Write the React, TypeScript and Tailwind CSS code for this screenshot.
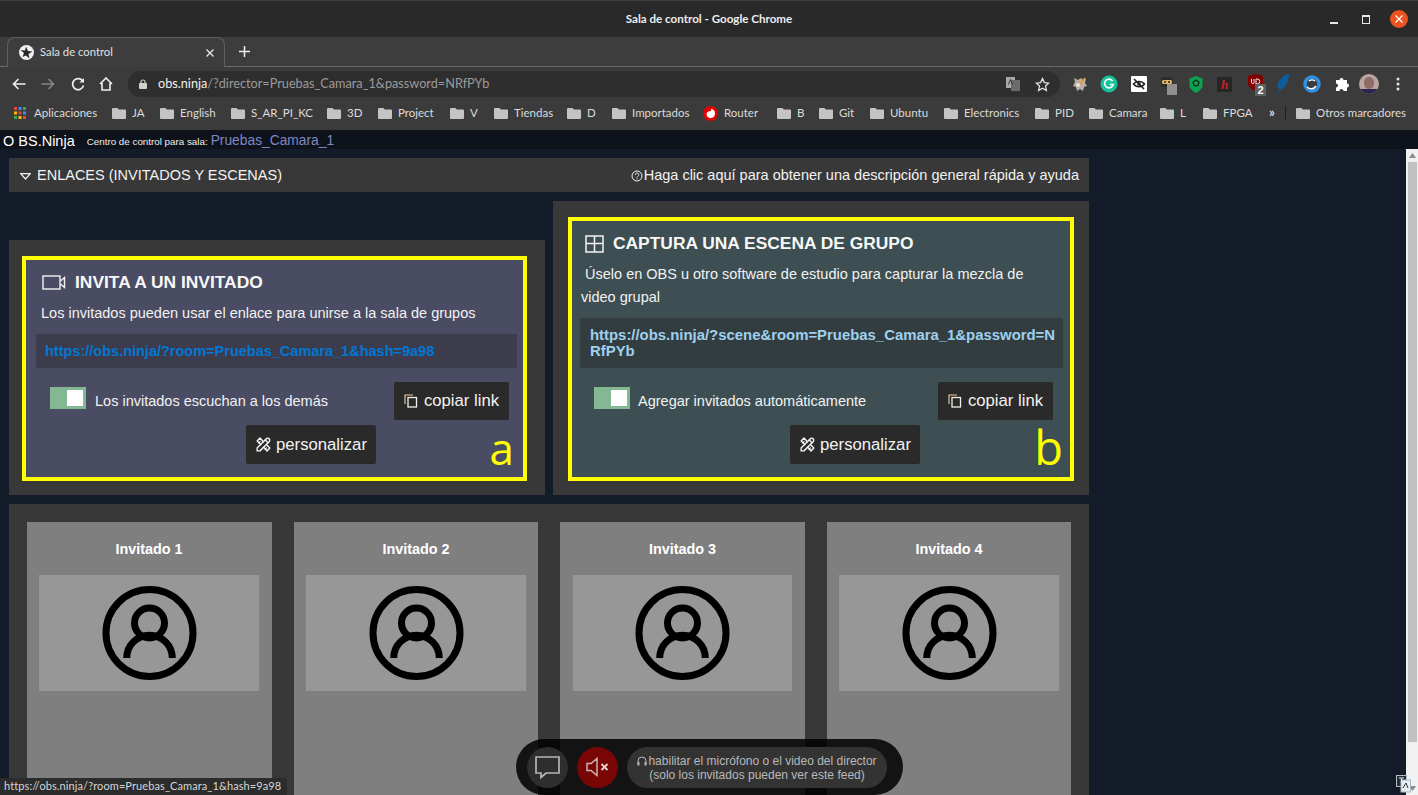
import React from "react";
import { TbTools } from "react-icons/tb";

const bookmarks: [string, string][] = [
  ["JA", "w-[48px]"],
  ["English", "w-[71px]"],
  ["S_AR_PI_KC", "w-[96px]"],
  ["3D", "w-[51px]"],
  ["Project", "w-[72px]"],
  ["V", "w-[44px]"],
  ["Tiendas", "w-[73px]"],
  ["D", "w-[45px]"],
  ["Importados", "w-[91px]"],
];
const bookmarks2: [string, string][] = [
  ["B", "w-[42px]"],
  ["Git", "w-[51px]"],
  ["Ubuntu", "w-[74px]"],
  ["Electronics", "w-[91px]"],
  ["PID", "w-[54px]"],
  ["Camara", "w-[71px]"],
  ["L", "w-[43px]"],
  ["FPGA", "w-[66px]"],
];

function Folder() {
  return (
    <svg width="14" height="12" viewBox="0 0 14 12" className="shrink-0">
      <path d="M1 1h4.500l1.300 1.500H13a1 1 0 0 1 1 1V11a1 1 0 0 1-1 1H1a1 1 0 0 1-1-1V2a1 1 0 0 1 1-1z" fill="#c4c4c4" />
    </svg>
  );
}

function Bookmark({ label, w }: { label: string; w: string }) {
  return (
    <div className={`flex items-center gap-[6px] shrink-0 ${w}`}>
      <Folder />
      <span className="whitespace-nowrap">{label}</span>
    </div>
  );
}

function Extensions() {
  return (
    <div className="flex items-center shrink-0">
      <svg width="18" height="18" viewBox="0 0 18 18" className="ml-[11px]">
        <path d="M3 3l4 2 3-2 2 2 3-2-1 5 2 3-3 1-1 4-3-2-3 2-1-4-3-1 2-4z" fill="#b9ada4" />
        <path d="M9 9l5-6" stroke="#e09a2b" strokeWidth="1.600" />
        <circle cx="7" cy="10" r="2" fill="#e8e4df" />
      </svg>
      <svg width="20" height="20" viewBox="0 0 20 20" className="ml-[10px]">
        <circle cx="10" cy="10" r="8.500" fill="#15c39a" />
        <path d="M13.600 7a4.400 4.400 0 1 0 .6 3.500h-3.500" fill="none" stroke="#fff" strokeWidth="1.700" />
      </svg>
      <svg width="16" height="16" viewBox="0 0 16 16" className="ml-[12px]">
        <rect width="16" height="16" rx="1" fill="#fff" />
        <path d="M2.500 8C5 4.500 11 4.500 13.500 8 11 11.500 5 11.500 2.500 8z" fill="none" stroke="#222" strokeWidth="1.500" />
        <circle cx="8" cy="8" r="1.800" fill="#222" />
        <path d="M3 3l10 10" stroke="#222" strokeWidth="1.600" />
      </svg>
      <div className="relative w-[20px] h-[20px] ml-[13px]">
        <svg width="14" height="12" viewBox="0 0 14 12" className="absolute left-0 top-[2px]">
          <rect x="1" y="1" width="12" height="10" rx="3" fill="#2c2c2c" />
          <rect x="2" y="4" width="10" height="4" rx="1.500" fill="#e3b766" />
          <circle cx="5" cy="6" r="1" fill="#222" />
          <circle cx="9" cy="6" r="1" fill="#222" />
        </svg>
        <div className="absolute left-[7px] top-[10px] w-[10px] h-[11px] bg-[#8f8f8f]" />
      </div>
      <svg width="14" height="17" viewBox="0 0 14 17" className="ml-[9px]">
        <path d="M7 0l6.500 2.500V9c0 3.500-3 6-6.500 8C3.500 15 .5 12.500 .5 9V2.500z" fill="#0aa14f" />
        <path d="M7 4l3 2.200-1.100 3.500H5.100L4 6.200z" fill="none" stroke="#0c2d1b" strokeWidth="1.300" />
      </svg>
      <div className="w-[15px] h-[15px] ml-[14px] bg-[#262626] flex items-center justify-center text-[13px] italic font-bold text-[#d02020] [font-family:'Liberation_Serif',serif] leading-none">
        h
      </div>
      <div className="relative w-[20px] h-[20px] ml-[16px]">
        <svg width="15" height="17" viewBox="0 0 15 17" className="absolute left-0 top-0">
          <path d="M7.500 0L15 2v7c0 4-3.500 6.500-7.500 8C3.500 15.500 0 13 0 9V2z" fill="#800000" />
          <path d="M3.500 5v3.500c0 1.500 2.500 1.500 2.500 0V5M8 5v5h1.300a2.500 2.500 0 0 0 0-5z" fill="none" stroke="#eee" strokeWidth="1" />
        </svg>
        <div className="absolute left-[7px] top-[10px] w-[11px] h-[12px] bg-[#5e5e5e] text-white text-[11px] font-bold leading-[12px] text-center [font-family:'Liberation_Sans',sans-serif]">
          2
        </div>
      </div>
      <svg width="14" height="20" viewBox="0 0 14 20" className="ml-[8px]">
        <path d="M13 0C7 2 2 7 2 12c0 2 1 3 3 3C9 14 12 7 13 0zM4 15l-3 5" fill="#0d5d9c" stroke="#0d5d9c" strokeWidth="1" />
      </svg>
      <svg width="18" height="18" viewBox="0 0 18 18" className="ml-[13px]">
        <circle cx="9" cy="9" r="7" fill="none" stroke="#2f8fe0" strokeWidth="3.500" />
        <path d="M4 12c3 3 7 2 9-1M6 6c2-1.500 4-1.500 6 0" fill="none" stroke="#fff" strokeWidth="1.400" />
      </svg>
      <svg width="16" height="16" viewBox="0 0 16 16" className="ml-[14px]">
        <path d="M1 4h3.500a2 2 0 1 1 4 0H12v3.500a2 2 0 1 1 0 4V15H8.500a2 2 0 1 0-4 0H1v-3.500a2 2 0 1 0 0-4z" fill="#fff" />
      </svg>
      <div className="relative w-[20px] h-[20px] ml-[8px] rounded-full overflow-hidden bg-[#b9a6a3]">
        <div className="absolute left-[5px] top-[3px] w-[10px] h-[12px] rounded-full bg-[#8e6d65]" />
        <div className="absolute left-0 top-[15px] w-[20px] h-[5px] bg-[#2a2550]" />
      </div>
      <svg width="4" height="14" viewBox="0 0 4 14" className="ml-[17px] mr-[18px]">
        <circle cx="2" cy="2" r="1.500" fill="#e6e6e6" />
        <circle cx="2" cy="7" r="1.500" fill="#e6e6e6" />
        <circle cx="2" cy="12" r="1.500" fill="#e6e6e6" />
      </svg>
    </div>
  );
}

function Chrome() {
  return (
    <div className="shrink-0 text-[#e6e6e6] [font-family:Lato,'Noto_Sans',sans-serif]">
      <div className="relative h-[37px] bg-[#292929] flex items-center justify-center border-t border-[#3d3d3d]">
        <span className="text-[11.600px] font-bold text-[#ededed]">Sala de control - Google Chrome</span>
        <div className="absolute right-[10px] top-[9px] flex items-center">
          <div className="w-[8px] h-[1.500px] bg-[#e6e6e6] mt-[8px] mr-[24px]" />
          <div className="w-[8px] h-[9px] border border-[#e6e6e6] border-t-2 mr-[20px]" />
          <div className="w-[18px] h-[18px] rounded-full bg-[#e95420] flex items-center justify-center">
            <svg width="8" height="8" viewBox="0 0 8 8"><path d="M.5.5l7 7M7.500.5l-7 7" stroke="#fff" strokeWidth="1.200" /></svg>
          </div>
        </div>
      </div>
      <div className="h-[30px] bg-[#3d3d3d] border-b border-[#6a6a6a] flex items-end pl-[7px]">
        <div className="w-[218px] h-[30px] -mb-px bg-[#3d3d3d] border border-b-0 border-[#5f5f5f] rounded-t-[8px] flex items-center pl-[11px] pr-[10px]">
          <svg width="15" height="15" viewBox="0 0 15 15" className="shrink-0">
            <circle cx="7.500" cy="7.500" r="7.500" fill="#f1f1f1" />
            <path d="M7 1.500l2 4.500 4.500.5L9.500 9l1 4.500L7 10.500 3.500 12 5 8 1.500 5 6 5.500z" fill="#2a2a2a" />
          </svg>
          <span className="ml-[6px] text-[11.300px] text-[#e0e0e0] flex-1">Sala de control</span>
          <svg width="8" height="8" viewBox="0 0 8 8"><path d="M.5.5l7 7M7.500.5l-7 7" stroke="#e8e8e8" strokeWidth="1.300" /></svg>
        </div>
        <svg width="11" height="11" viewBox="0 0 11 11" className="ml-[14px] mb-[9px]"><path d="M5.500 0v11M0 5.500h11" stroke="#f0f0f0" strokeWidth="1.500" /></svg>
      </div>
      <div className="h-[33px] pt-[1px] bg-[#3b3b3b] flex items-center">
        <div className="flex items-center w-[128px] shrink-0 pl-[12px]">
          <svg width="14" height="12" viewBox="0 0 14 12"><path d="M13.500 6H1.500M6.500 1l-5 5 5 5" fill="none" stroke="#efefef" strokeWidth="1.600" /></svg>
          <svg width="14" height="12" viewBox="0 0 14 12" className="ml-[15px]"><path d="M.5 6h12M7.500 1l5 5-5 5" fill="none" stroke="#858585" strokeWidth="1.600" /></svg>
          <svg width="14" height="14" viewBox="0 0 14 14" className="ml-[16px]"><path d="M12 4.500A5.500 5.500 0 1 0 12.500 8.500" fill="none" stroke="#efefef" strokeWidth="1.700" /><path d="M13 1v4.500H8.500z" fill="#efefef" /></svg>
          <svg width="14" height="14" viewBox="0 0 14 14" className="ml-[14px]"><path d="M1 7l6-6 6 6M3 6v7h8V6" fill="none" stroke="#efefef" strokeWidth="1.600" /></svg>
        </div>
        <div className="w-[932px] h-[26px] bg-[#2e2e2e] rounded-full flex items-center pl-[11px] pr-[10px] shrink-0">
          <svg width="8" height="10" viewBox="0 0 8 10" className="shrink-0"><rect y="4" width="8" height="6" rx="1" fill="#d0d0d0" /><path d="M2 4.500V3a2 2 0 0 1 4 0v1.500" fill="none" stroke="#d0d0d0" strokeWidth="1.200" /></svg>
          <span className="ml-[11px] text-[12.700px] text-[#9b9b9b]">
            <span className="text-[#efefef]">obs.ninja</span>/?director=Pruebas_Camara_1&amp;password=NRfPYb
          </span>
          <div className="flex-1" />
          <svg width="14" height="16" viewBox="0 0 14 16" className="shrink-0">
            <rect x="0" y="1" width="9" height="11" fill="#a8a8a8" />
            <rect x="5" y="4" width="9" height="11" fill="#6c6c6c" />
            <path d="M2.500 8.500L4.500 3.500 6.500 8.500" fill="none" stroke="#333" strokeWidth="1" />
          </svg>
          <svg width="15" height="15" viewBox="0 0 24 24" className="ml-[15px] shrink-0"><path d="M12 2.500l3 6.500 7 .8-5.200 4.700 1.400 7L12 17.900 5.800 21.500l1.400-7L2 9.800 9 9z" fill="none" stroke="#e6e6e6" strokeWidth="2" /></svg>
        </div>
        <Extensions />
      </div>
      <div className="h-[30px] bg-[#3b3b3b] flex items-center pb-[4px] text-[11.500px] text-[#dcdcdc] pl-[14px] whitespace-nowrap">
        <div className="flex items-center w-[98px] shrink-0">
          <svg width="12" height="12" viewBox="0 0 12 12" className="shrink-0">
            <rect width="3" height="3" fill="#e84335" /><rect x="4.500" width="3" height="3" fill="#4285f4" /><rect x="9" width="3" height="3" fill="#34a853" />
            <rect y="4.500" width="3" height="3" fill="#fbbc04" /><rect x="4.500" y="4.500" width="3" height="3" fill="#e84335" /><rect x="9" y="4.500" width="3" height="3" fill="#4285f4" />
            <rect y="9" width="3" height="3" fill="#34a853" /><rect x="4.500" y="9" width="3" height="3" fill="#fbbc04" /><rect x="9" y="9" width="3" height="3" fill="#e84335" />
          </svg>
          <span className="ml-[8px]">Aplicaciones</span>
        </div>
        {bookmarks.map(([l, w]) => <Bookmark key={l} label={l} w={w} />)}
        <div className="flex items-center gap-[6px] w-[74px] shrink-0">
          <svg width="15" height="15" viewBox="0 0 15 15" className="shrink-0">
            <circle cx="7.500" cy="7.500" r="7.500" fill="#e60000" />
            <path d="M8 3c2.500 0 4 1.500 4 4.500S10 12 7.500 12 3.500 10 3.500 8 5.500 5 8 5z" fill="#fff" />
          </svg>
          <span>Router</span>
        </div>
        {bookmarks2.map(([l, w]) => <Bookmark key={l} label={l} w={w} />)}
        <span className="w-[16px] shrink-0 text-[13px] font-bold">»</span>
        <div className="w-px h-[14px] bg-[#1f1f1f] mr-[10px] shrink-0" />
        <Bookmark label="Otros marcadores" w="w-[110px]" />
      </div>
    </div>
  );
}

function CopyIcon() {
  return (
    <svg width="14" height="14" viewBox="0 0 14 14" className="shrink-0">
      <path d="M1 10V1h8" fill="none" stroke="#f4cfa6" strokeWidth="1.100" />
      <rect x="4" y="3.500" width="8.500" height="9.500" fill="none" stroke="#f0f0f0" strokeWidth="1.300" />
    </svg>
  );
}

function Btn({ icon, label, cls }: { icon: React.ReactNode; label: string; cls: string }) {
  return (
    <div className={`bg-[#2a2a2a] rounded-[2px] flex items-center justify-center gap-[6px] text-[16.700px] text-[#f3f3f3] shrink-0 ${cls}`}>
      {icon}
      <span>{label}</span>
    </div>
  );
}

function Toggle() {
  return (
    <div className="w-[36px] h-[22px] mt-[5px] bg-[#83b893] flex items-center justify-end pr-[3px] shrink-0">
      <div className="w-[16px] h-[16px] bg-white" />
    </div>
  );
}

function Bottom({ toggleLabel, labelGap, rowLeft, toggleW, pLeft }: { toggleLabel: string; labelGap: string; rowLeft: string; toggleW: string; pLeft: string }) {
  return (
    <>
      <div className={`flex items-center mt-[14px] ${rowLeft}`}>
        <div className={`flex items-start h-[38px] ${toggleW}`}>
          <Toggle />
          <span className={`${labelGap} text-[14.500px] text-[#f2f2f2] mt-[9px] whitespace-nowrap`}>{toggleLabel}</span>
        </div>
        <Btn icon={<CopyIcon />} label="copiar link" cls="w-[115px] h-[38px]" />
      </div>
      <div className={`mt-[5px] ${pLeft}`}>
        <Btn icon={<TbTools size={17} color="#f2f2f2" />} label="personalizar" cls="w-[130px] h-[39px] !gap-[4px]" />
      </div>
    </>
  );
}

function Guest({ n, cls }: { n: number; cls: string }) {
  return (
    <div className={`h-[300px] bg-[#7f7f7f] shrink-0 ${cls}`}>
      <div className="h-[53px] flex items-center justify-center pt-[3px] text-[14.400px] font-bold text-white">Invitado {n}</div>
      <div className="h-[116px] bg-[#979797] flex items-center justify-center">
        <svg width="95" height="94" viewBox="0 0 95 94">
          <g fill="none" stroke="#000" strokeWidth="7">
            <circle cx="47.500" cy="47" r="43.500" />
            <circle cx="47.500" cy="37" r="15" />
            <path d="M24.700 72a22.800 22.800 0 0 1 45.600 0" />
          </g>
        </svg>
      </div>
    </div>
  );
}

export default function App() {
  return (
    <div className="relative w-[1418px] h-[795px] overflow-hidden flex flex-col bg-[#141b28] [font-family:'Liberation_Sans',Arial,sans-serif]">
      <Chrome />
      <div className="h-[19px] pt-[4px] bg-[#0e121b] flex items-center pl-[3px] shrink-0 text-white whitespace-nowrap">
        <span className="text-[14.500px]">O BS.Ninja</span>
        <span className="text-[9.800px] ml-[12px] mt-[2px] text-[#eeeeee]">Centro de control para sala:</span>
        <span className="text-[13.800px] ml-[3px] text-[#7f88c4]">Pruebas_Camara_1</span>
      </div>
      <div className="flex-1 flex min-h-0">
        <div className="flex-1 min-w-0 pl-[9px] pt-[9px]">
          <div className="w-[1080px] flex flex-col gap-[9px]">
            <div className="h-[34px] pt-[2px] bg-[#383838] flex items-center justify-between pl-[11px] pr-[10px] text-[14.500px] text-[#f2f2f2]">
              <div className="flex items-center gap-[6px]">
                <svg width="11" height="7" viewBox="0 0 11 7"><path d="M.8.700h9.400L5.500 6z" fill="none" stroke="#f0f0f0" strokeWidth="1.200" /></svg>
                <span>ENLACES (INVITADOS Y ESCENAS)</span>
              </div>
              <div className="flex items-center">
                <svg width="12" height="12" viewBox="0 0 12 12" className="mr-[1px]">
                  <circle cx="6" cy="6" r="5" fill="none" stroke="#f0f0f0" strokeWidth="1" />
                  <path d="M4.300 4.800a1.700 1.700 0 1 1 2.500 1.500c-.6.300-.8.600-.8 1.100" fill="none" stroke="#f0f0f0" strokeWidth=".9" />
                  <circle cx="6" cy="8.800" r=".6" fill="#f0f0f0" />
                </svg>
                <span>Haga clic aquí para obtener una descripción general rápida y ayuda</span>
              </div>
            </div>
            <div className="flex items-end gap-[8px]">
              <div className="w-[536px] h-[255px] bg-[#383838] pl-[13px] pr-[18px] pt-[16px]">
                <div className="relative w-[505px] h-[225px] border-4 border-[#ffff00] bg-[#4a4c63] pt-[9px]">
                  <div className="flex items-center h-[27px] pl-[16px]">
                    <svg width="24" height="15" viewBox="0 0 24 15" className="shrink-0">
                      <rect x="1" y="1" width="17" height="13" fill="none" stroke="#f3f3f3" strokeWidth="1.400" />
                      <path d="M18.500 6l4-3.500v10l-4-3.500" fill="none" stroke="#f3f3f3" strokeWidth="1.400" />
                    </svg>
                    <span className="ml-[9px] text-[17.400px] font-bold text-[#f7f7f7] whitespace-nowrap">INVITA A UN INVITADO</span>
                  </div>
                  <div className="mt-[5px] pl-[15px] h-[26px] flex items-center text-[14.500px] text-[#f2f2f2] whitespace-nowrap">Los invitados pueden usar el enlace para unirse a la sala de grupos</div>
                  <div className="mt-[7px] ml-[10px] mr-[6px] h-[34px] pt-[1px] bg-[#3c3c4d] flex items-center pl-[9px] text-[14.500px] font-bold text-[#0078d4]">https://obs.ninja/?room=Pruebas_Camara_1&amp;hash=9a98</div>
                  <Bottom toggleLabel="Los invitados escuchan a los demás" labelGap="ml-[9px]" rowLeft="pl-[24px]" toggleW="w-[344px]" pLeft="pl-[220px]" />
                  <div className="absolute right-[9px] bottom-[7px] text-[44px] leading-none text-[#ffff00] [font-family:'Open_Sans',sans-serif]">a</div>
                </div>
              </div>
              <div className="w-[536px] h-[294px] bg-[#383838] pl-[15px] pr-[15px] pt-[16px]">
                <div className="relative w-[506px] h-[264px] border-4 border-[#ffff00] bg-[#3d4f52] pt-[9px]">
                  <div className="flex items-center h-[27px] pl-[13px]">
                    <svg width="19" height="18" viewBox="0 0 19 18" className="shrink-0">
                      <path d="M1 1h17v16H1zM9.500 1v16M1 8.500h17" fill="none" stroke="#f3f3f3" strokeWidth="1.500" />
                    </svg>
                    <span className="ml-[9px] text-[17.400px] font-bold text-[#f7f7f7] whitespace-nowrap">CAPTURA UNA ESCENA DE GRUPO</span>
                  </div>
                  <div className="mt-[6px] pl-[9px] pr-[20px] text-[14.500px] leading-[23px] text-[#f2f2f2]">&nbsp;Úselo en OBS u otro software de estudio para capturar la mezcla de video grupal</div>
                  <div className="mt-[9px] ml-[8px] mr-[7px] h-[50px] bg-[#333d3f] pl-[10px] pt-[9px] pr-[4px] text-[14.900px] leading-[16px] font-bold text-[#9fd0ef] break-all">https://obs.ninja/?scene&amp;room=Pruebas_Camara_1&amp;password=NRfPYb</div>
                  <Bottom toggleLabel="Agregar invitados automáticamente" labelGap="ml-[8px]" rowLeft="pl-[22px]" toggleW="w-[344px]" pLeft="pl-[218px]" />
                  <div className="absolute right-[7px] bottom-[6px] text-[47px] leading-none text-[#ffff00] [font-family:'Open_Sans',sans-serif]">b</div>
                </div>
              </div>
            </div>
            <div className="h-[400px] bg-[#383838] flex pt-[18px] pl-[18px]">
              <Guest n={1} cls="w-[245px] pl-[12px] pr-[13px]" />
              <Guest n={2} cls="w-[244px] ml-[22px] px-[12px]" />
              <Guest n={3} cls="w-[245px] ml-[22px] px-[13px]" />
              <Guest n={4} cls="w-[244px] ml-[22px] px-[12px]" />
            </div>
          </div>
        </div>
        <div className="w-[12px] bg-[#f1f1f1] shrink-0 flex flex-col items-center pl-[1px]">
          <svg width="7" height="5" viewBox="0 0 7 5" className="mt-[4px]"><path d="M3.500 0L7 5H0z" fill="#8a8a8a" /></svg>
          <div className="w-[9px] h-[580px] bg-[#c1c1c1] mt-[4px]" />
          <div className="flex-1" />
          <svg width="7" height="5" viewBox="0 0 7 5" className="mb-[4px]"><path d="M0 0h7L3.500 5z" fill="#8a8a8a" /></svg>
        </div>
      </div>

      <div className="absolute left-[516px] top-[739px] w-[387px] h-[56px] rounded-full bg-black/85 flex items-center pl-[11px]">
        <div className="w-[41px] h-[41px] rounded-full bg-[#2e2e2e] flex items-center justify-center shrink-0">
          <svg width="25" height="23" viewBox="0 0 25 23"><path d="M1 1h23v16H11l-5 4.500V17H1z" fill="none" stroke="#b5b5b5" strokeWidth="1.700" /></svg>
        </div>
        <div className="w-[41px] h-[41px] ml-[9px] rounded-full bg-[#7a0505] flex items-center justify-center shrink-0">
          <svg width="24" height="20" viewBox="0 0 24 20">
            <path d="M1 6.500h4L11 1.500v17l-6-5H1z" fill="none" stroke="#c9b3b3" strokeWidth="1.500" />
            <path d="M15.500 7l6 6M21.500 7l-6 6" stroke="#e3d2d2" strokeWidth="1.800" />
          </svg>
        </div>
        <div className="w-[260px] h-[41px] ml-[9px] pt-[2px] rounded-full bg-[#333333] flex items-center justify-center text-center text-[12px] leading-[14px] text-[#b9b9b9] shrink-0">
          <div>
            <div className="flex items-center justify-center">
              <svg width="10" height="11" viewBox="0 0 10 11" className="mr-[1px]"><path d="M1 8V5a4 4 0 0 1 8 0v3" fill="none" stroke="#b9b9b9" strokeWidth="1" /><rect x=".5" y="6" width="2" height="3.500" fill="#b9b9b9" /><rect x="7.500" y="6" width="2" height="3.500" fill="#b9b9b9" /></svg>
              <span>habilitar el micrófono o el video del director</span>
            </div>
            <div>(solo los invitados pueden ver este feed)</div>
          </div>
        </div>
      </div>

      <div className="absolute left-0 bottom-0 w-[287px] h-[17px] bg-[#2c2c2c] rounded-tr-[3px] pl-[4px] flex items-center text-[11px] tracking-[0.1px] text-[#d6d6d6] whitespace-nowrap [font-family:Lato,'Noto_Sans',sans-serif]">
        https://obs.ninja/?room=Pruebas_Camara_1&amp;hash=9a98
      </div>

      <svg width="15" height="18" viewBox="0 0 15 18" className="absolute left-[1396px] top-[775px]">
        <rect x=".5" y=".5" width="10" height="11" fill="#24303c" stroke="#b5bcc3" />
        <rect x="5" y="5" width="9.500" height="12" fill="#e9eef2" stroke="#a8b9c6" />
        <path d="M3 3h5M5.500 3v5" stroke="#e8e8e8" strokeWidth="1" />
        <path d="M7 13l3-5 2 5" fill="none" stroke="#333" strokeWidth="1" />
      </svg>
    </div>
  );
}
